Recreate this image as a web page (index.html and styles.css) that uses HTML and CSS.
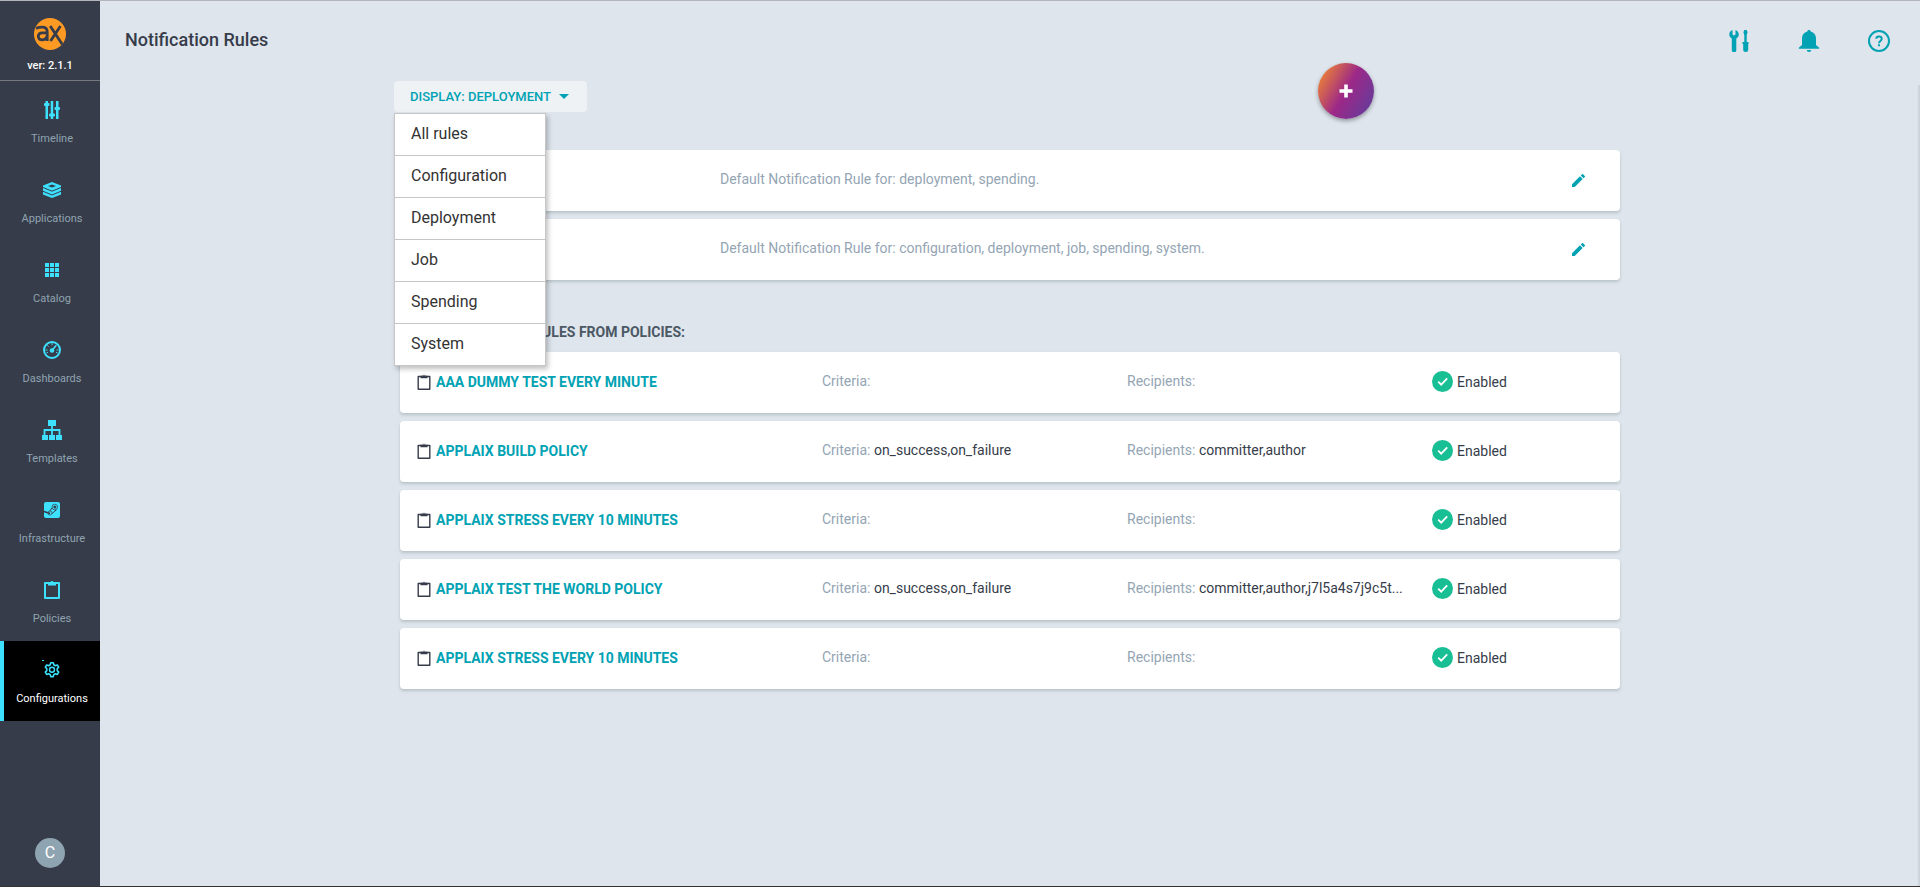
FILE: index.html
```html
<!DOCTYPE html>
<html lang="en">
<head>
<meta charset="utf-8">
<title>Notification Rules</title>
<link rel="stylesheet" href="styles.css">
</head>
<body>
<svg class="sprite" aria-hidden="true">
  <symbol id="i-clip" viewBox="0 0 14 16"><path d="M1.200 2.500h11.600v12.700H1.200z" fill="none" stroke="currentColor" stroke-width="1.400" stroke-linejoin="round"/><path fill="currentColor" fill-rule="evenodd" d="M3.500 1.800h2a1.600 1.600 0 0 1 3 0h2v2.400h-7zM7 1.300a.7.7 0 1 0 .01 0z"/></symbol>
  <symbol id="i-check" viewBox="0 0 21 21"><circle cx="10.500" cy="10.500" r="10.500" fill="#18be94"/><path d="M6.200 10.600l3 3 6-6.200" fill="none" stroke="#fff" stroke-width="1.800"/></symbol>
  <symbol id="i-pencil" viewBox="3 3 18 18"><path fill="currentColor" d="M3 17.250V21h3.750L17.810 9.940l-3.750-3.750L3 17.250zM20.710 7.040a1 1 0 0 0 0-1.410l-2.340-2.340a1 1 0 0 0-1.410 0l-1.830 1.830 3.750 3.750 1.830-1.830z"/></symbol>
</svg>
<div class="app">
  <nav class="sidebar" aria-label="Main">
    <div class="brand">
      <svg width="32" height="32" viewBox="0 0 32 32" aria-hidden="true"><defs><clipPath id="disc"><circle cx="16" cy="16" r="16"/></clipPath></defs><circle cx="16" cy="16" r="16" fill="#fd9a24"/><g clip-path="url(#disc)" fill="none" stroke="#373c4a" stroke-width="2.800"><path d="M2 10.500c2-1 4-1.300 6-1.300 3.500 0 5.200 1.200 5.200 4.300v9.500M13 14.800H8.500c-2.700 0-4.200 1.300-4.200 3.500s1.500 3.600 3.900 3.600c2.500 0 4-1.500 5-3.500"/><path d="M16.200 8L29 27.500M26.500 8L16.500 23"/></g></svg>
      <span class="version">ver: 2.1.1</span>
    </div>
    <a class="nav-item" href="#"><svg class="nav-icon" viewBox="0 0 20 20" aria-hidden="true"><g fill="currentColor"><path d="M3.500 1h2.500v18H3.500zM8.700 1h2.500v18H8.700zM14 1h2.500v18H14z"/><rect x="2" y="3" width="5.500" height="3" rx="1"/><rect x="7" y="13.500" width="6" height="3" rx="1"/><rect x="12.500" y="7" width="5.500" height="3" rx="1"/></g></svg>Timeline</a>
    <a class="nav-item" href="#"><svg class="nav-icon" viewBox="0 0 20 20" aria-hidden="true"><path fill="currentColor" fill-rule="evenodd" d="M10 2l9 3.500v9L10 18l-9-3.500v-9zM6 6l4 1.600L14 6l-4-1.500z"/><path d="M1 7.500l9 3.700 9-3.700M1 11.300L10 15l9-3.700" fill="none" stroke="#373c4a"/></svg>Applications</a>
    <a class="nav-item" href="#"><svg class="nav-icon" viewBox="0 0 20 20" aria-hidden="true"><path fill="currentColor" d="M3 3h4v4H3zM8 3h4v4H8zM13 3h4v4h-4zM3 8h4v4H3zM8 8h4v4H8zM13 8h4v4h-4zM3 13h4v4H3zM8 13h4v4H8zM13 13h4v4h-4z"/></svg>Catalog</a>
    <a class="nav-item" href="#"><svg class="nav-icon" viewBox="0 0 20 20" aria-hidden="true"><circle cx="10" cy="10" r="8" fill="none" stroke="currentColor" stroke-width="2"/><path d="M10 3.200v2M3.500 10h2M14.500 10h2M5.300 5.300l1.300 1.300M4.500 13l1.500-.7M15.500 13l-1.500-.7" stroke="currentColor"/><circle cx="10" cy="10.500" r="2.300" fill="currentColor"/><path d="M10 10.500l4.300-5.300" stroke="currentColor" stroke-width="1.600"/></svg>Dashboards</a>
    <a class="nav-item" href="#"><svg class="nav-icon" viewBox="0 0 20 20" aria-hidden="true"><path fill="currentColor" d="M6 0h8v6H6zM0 15h6v5H0zM7 15h6v5H7zM14 15h6v5h-6z"/><path d="M2.500 16v-6h15v6M10 5v11" fill="none" stroke="currentColor" stroke-width="1.800"/></svg>Templates</a>
    <a class="nav-item" href="#"><svg class="nav-icon" viewBox="0 0 20 20" aria-hidden="true"><rect x="2" y="2" width="16" height="16" rx="2" fill="currentColor"/><g fill="none" stroke="#373c4a"><path d="M2 11.500l6 2" stroke-width="1.800"/><circle cx="12.800" cy="7" r="2.800" stroke-width=".7"/><circle cx="8" cy="13" r="2" stroke-width=".7"/><path d="M9.800 8l-2 3M14.500 9.700L10 13.500"/></g><circle cx="12.800" cy="7" r="1.500" fill="#373c4a"/></svg>Infrastructure</a>
    <a class="nav-item" href="#"><svg class="nav-icon" viewBox="0 0 20 20" aria-hidden="true"><path d="M3 3h14v15H3z" fill="none" stroke="currentColor" stroke-width="2" stroke-linejoin="round"/><path d="M6 2h2.500a1.700 1.700 0 0 1 3 0H14v3.500H6z" fill="currentColor"/></svg>Policies</a>
    <a class="nav-item is-active" href="#" aria-current="page"><svg class="nav-icon" viewBox="0 0 20 20" aria-hidden="true"><path d="M0 0h2v1H0z" fill="currentColor"/><path d="M8.700 2.800h2.600l.5 2 1.500.9 2-.7 1.400 2.300-1.500 1.500v1.800l1.500 1.500-1.400 2.300-2-.6-1.500.8-.5 2H8.700l-.5-2-1.500-.8-2 .6-1.400-2.300 1.500-1.500V8.800L3.300 7.300 4.700 5l2 .7 1.500-.9z" fill="none" stroke="currentColor" stroke-width="1.600" stroke-linejoin="round"/><circle cx="10" cy="9.700" r="2.500" fill="none" stroke="currentColor" stroke-width="1.400"/></svg>Configurations</a>
    <button class="avatar" type="button" aria-label="Account C">C</button>
  </nav>
  <div class="page">
    <header class="topbar">
      <h1 class="title">Notification Rules</h1>
      <div class="tools">
        <button class="tool" type="button" aria-label="Tools"><svg width="22" height="22" viewBox="0 0 22 22" aria-hidden="true"><g fill="currentColor"><path d="M4.500 0v4.500L6 5.500l1.500-1V0c2 .7 3.300 2.500 3.300 4.500 0 1.800-1 3.200-2.500 4V20a2 2 0 0 1-4.500 0V8.500C2.200 7.700 1.300 6.300 1.300 4.500 1.300 2.500 2.500.7 4.500 0z"/><path d="M16.300 0h2.400l.9 2.200-.9 2.800v7h1.800v2h-.3v6a2.500 2 0 0 1-5 0v-6h-.7v-2h1.800V5l-.9-2.800z"/></g></svg></button>
        <button class="tool" type="button" aria-label="Notifications"><svg width="22" height="22" viewBox="0 0 22 22" aria-hidden="true"><path fill="currentColor" d="M11 0c1 0 1.700.7 1.700 1.600 3.400.8 5.300 3.600 5.300 7V15l3.200 2.800v1H.8v-1L4 15V8.600c0-3.400 1.900-6.200 5.300-7C9.300.7 10 0 11 0zM8.800 20h4.400a2.200 2 0 0 1-4.400 0z"/></svg></button>
        <button class="tool" type="button" aria-label="Help"><svg width="22" height="22" viewBox="0 0 22 22" aria-hidden="true"><g fill="none" stroke="currentColor" stroke-width="2"><circle cx="11" cy="11" r="10"/><path d="M8.300 8.800C8.300 7.200 9.400 6.500 11 6.500s2.700.8 2.700 2.300c0 2.100-2.700 2.300-2.700 4.500"/></g><path fill="currentColor" d="M10 14.200h2v2h-2z"/></svg></button>
      </div>
    </header>
    <main class="content">
      <div class="filter">
        <button class="filter-toggle" type="button" aria-expanded="true" aria-haspopup="true">DISPLAY: DEPLOYMENT<span class="caret"></span></button>
        <div class="menu">
          <button class="menu-item" type="button">All rules</button>
          <button class="menu-item" type="button">Configuration</button>
          <button class="menu-item" type="button">Deployment</button>
          <button class="menu-item" type="button">Job</button>
          <button class="menu-item" type="button">Spending</button>
          <button class="menu-item" type="button">System</button>
        </div>
      </div>
      <button class="add" type="button" aria-label="Add rule"><svg width="14" height="14" viewBox="0 0 14 14" aria-hidden="true"><path d="M7 .5v13M.5 7h13" stroke="#fff" stroke-width="3.600"/></svg></button>
      <section class="cards">
        <article class="card rule"><p class="muted">Default Notification Rule for: deployment, spending.</p><button class="edit" type="button" aria-label="Edit"><svg width="13" height="13"><use href="#i-pencil"/></svg></button></article>
        <article class="card rule"><p class="muted">Default Notification Rule for: configuration, deployment, job, spending, system.</p><button class="edit" type="button" aria-label="Edit"><svg width="13" height="13"><use href="#i-pencil"/></svg></button></article>
      </section>
      <h2 class="subhead">NOTIFICATION RULES FROM POLICIES:</h2>
      <section class="cards">
        <article class="card policy"><a class="name" href="#"><svg class="clip"><use href="#i-clip"/></svg>AAA DUMMY TEST EVERY MINUTE</a><p class="cell"><span class="muted">Criteria:</span></p><p class="cell"><span class="muted">Recipients:</span></p><p class="status"><svg class="check"><use href="#i-check"/></svg>Enabled</p></article>
        <article class="card policy"><a class="name" href="#"><svg class="clip"><use href="#i-clip"/></svg>APPLAIX BUILD POLICY</a><p class="cell"><span class="muted">Criteria:</span> on_success,on_failure</p><p class="cell"><span class="muted">Recipients:</span> committer,author</p><p class="status"><svg class="check"><use href="#i-check"/></svg>Enabled</p></article>
        <article class="card policy"><a class="name" href="#"><svg class="clip"><use href="#i-clip"/></svg>APPLAIX STRESS EVERY 10 MINUTES</a><p class="cell"><span class="muted">Criteria:</span></p><p class="cell"><span class="muted">Recipients:</span></p><p class="status"><svg class="check"><use href="#i-check"/></svg>Enabled</p></article>
        <article class="card policy"><a class="name" href="#"><svg class="clip"><use href="#i-clip"/></svg>APPLAIX TEST THE WORLD POLICY</a><p class="cell"><span class="muted">Criteria:</span> on_success,on_failure</p><p class="cell"><span class="muted">Recipients:</span> committer,author,j7l5a4s7j9c5t...</p><p class="status"><svg class="check"><use href="#i-check"/></svg>Enabled</p></article>
        <article class="card policy"><a class="name" href="#"><svg class="clip"><use href="#i-clip"/></svg>APPLAIX STRESS EVERY 10 MINUTES</a><p class="cell"><span class="muted">Criteria:</span></p><p class="cell"><span class="muted">Recipients:</span></p><p class="status"><svg class="check"><use href="#i-check"/></svg>Enabled</p></article>
      </section>
    </main>
    <div class="drawer-edge"></div>
  </div>
</div>
</body>
</html>
```

FILE: styles.css
```css
* { box-sizing: border-box; }
body { margin: 0; background: #dee5ec; color: #363c4a; font: 14px/20px Roboto, "Liberation Sans", sans-serif; }
h1, h2, p { margin: 0; }
button { margin: 0; padding: 0; border: 0; background: none; color: inherit; font: inherit; cursor: pointer; }
a { color: inherit; text-decoration: none; }
svg { display: block; flex: none; }
.sprite { position: absolute; width: 0; height: 0; }

.app { display: flex; min-height: 100vh; border-top: 1px solid #b4b4bc; border-bottom: 1px solid #333; }

.sidebar { flex: none; display: flex; flex-direction: column; width: 100px; background: #373c4a; }
.brand { display: flex; flex-direction: column; align-items: center; gap: 6px; height: 80px; padding-top: 17px; border-bottom: 1px solid #77787c; }
.version { color: #fff; font-size: 11px; font-weight: 500; line-height: 20px; }
.nav-item { display: flex; flex-direction: column; align-items: center; gap: 9px; height: 80px; padding-top: 19px; border-left: 4px solid transparent; color: #8fa4b1; font-size: 11px; line-height: 20px; }
.nav-icon { width: 20px; height: 20px; color: #3de1fd; }
.nav-item.is-active { border-left-color: #3de1fd; background: #000; color: #fff; }
.avatar { align-self: center; width: 30px; height: 30px; margin: auto 0 18px; border-radius: 50%; background: #8fa4b1; color: #fff; font-size: 16px; line-height: 26px; }

.page { position: relative; flex: 1; min-width: 0; }
.topbar { display: flex; align-items: center; justify-content: space-between; height: 80px; padding: 0 30px 0 25px; }
.title { padding-bottom: 2px; font-size: 18px; font-weight: 500; line-height: 24px; }
.tools { display: flex; gap: 48px; color: #00a2b3; }
.drawer-edge { position: absolute; top: 84px; right: 0; bottom: 0; width: 3px; background: linear-gradient(90deg, #dee5ec, #c5ced4); }

.content { display: grid; grid-template-columns: 1fr auto; width: 1232px; max-width: 100%; margin: 0 auto; padding-right: 6px; }
.filter { position: relative; width: max-content; height: 32px; }
.filter-toggle { display: flex; align-items: center; gap: 8px; height: 31px; padding: 0 18px 0 16px; border-radius: 4px; background: #eef2f5; color: #00a2b3; font-size: 13px; font-weight: 500; }
.caret { border: 5px solid transparent; border-top-color: #00a2b3; border-bottom: 0; }
.menu { position: absolute; z-index: 2; top: 32px; left: 0; width: 152px; border: 1px solid #c6c6c6; background: #fff; box-shadow: 2px 3px 5px rgba(0, 0, 0, .25); }
.menu-item { display: block; width: 100%; height: 42px; padding: 0 16px 2px; border-bottom: 1px solid #c6c6c6; color: #333; font-size: 16px; text-align: left; }
.menu-item:last-child { height: 41px; border-bottom: 0; }
.add { display: grid; place-items: center; width: 56px; height: 56px; margin: -18px 246px 0 0; border-radius: 50%; background: linear-gradient(120deg, #f58a2e 5%, #9c2888 50%, #613d9b 95%); box-shadow: 0 2px 4px rgba(0, 0, 0, .35); }

.cards { grid-column: 1 / -1; display: grid; gap: 8px; margin-left: 6px; }
.filter ~ .cards:first-of-type { margin-top: 31px; }
.card { display: grid; align-items: center; min-height: 61px; border-radius: 4px; background: #fff; box-shadow: 0 2px 3px rgba(100, 120, 120, .3); }
.rule { grid-template-columns: 1fr auto; padding: 0 35px 0 320px; }
.rule .muted { padding-bottom: 4px; }
.edit { color: #00a2b3; }
.muted { color: #94a5b4; }
.subhead { grid-column: 1 / -1; margin: 42px 0 10px 6px; padding-left: 36px; color: #4b5864; font-size: 14px; font-weight: 700; line-height: 20px; }
.policy { grid-template-columns: 405fr 305fr 305fr 171fr; padding: 0 17px 2px; }
.name { display: flex; align-items: center; gap: 5px; color: #00a2b3; font-weight: 700; }
.clip { width: 14px; height: 16px; color: #363c4a; }
.cell { overflow: hidden; padding-bottom: 2px; text-overflow: ellipsis; white-space: nowrap; }
.status { display: flex; align-items: center; gap: 4px; line-height: 18px; }
.check { width: 21px; height: 21px; }
```
